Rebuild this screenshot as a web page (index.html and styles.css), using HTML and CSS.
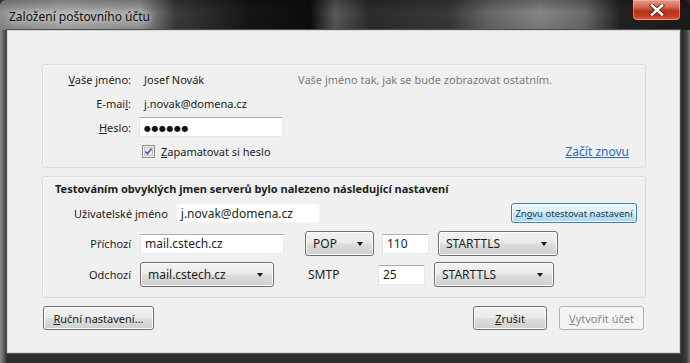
FILE: index.html
```html
<!DOCTYPE html>
<html lang="cs">
<head>
    <meta charset="UTF-8">
    <meta name="viewport" content="width=device-width, initial-scale=1.0">
    <title>Založení poštovního účtu</title>
    <link rel="stylesheet" href="styles.css">
</head>
<body>
    <div class="window">
        <div class="titlebar">
            <span class="title">Založení poštovního účtu</span>
            <div class="close-btn">
                <svg width="16" height="12" viewBox="0 0 16 12">
                    <path d="M3 1.5 L13 10.5 M13 1.5 L3 10.5" stroke="#5a1a10" stroke-width="4.2" stroke-linecap="square"/>
                    <path d="M3 1.5 L13 10.5 M13 1.5 L3 10.5" stroke="#ffffff" stroke-width="2.6" stroke-linecap="square"/>
                </svg>
            </div>
        </div>

        <div class="client">
            <!-- identity -->
            <div class="group identity">
                <div class="label"><u>V</u>aše jméno:</div>
                <div class="value">Josef Novák</div>
                <div class="hint">Vaše jméno tak, jak se bude zobrazovat ostatním.</div>

                <div class="label">E-mai<u>l</u>:</div>
                <div class="value">j.novak@domena.cz</div>
                <div></div>

                <div class="label"><u>H</u>eslo:</div>
                <div class="textbox pass-box"><span class="dots">●●●●●●</span></div>
                <div></div>

                <div></div>
                <div class="check-row">
                    <span class="checkbox">
                        <svg width="13" height="13" viewBox="0 0 13 13">
                            <rect x="0.5" y="0.5" width="12" height="12" fill="#f4f4f4" stroke="#8e8f8f"/>
                            <rect x="2.5" y="2.5" width="8" height="8" fill="#e6e8ea" stroke="#c4c7cb"/>
                            <path d="M3.5 6.5 L5.5 8.8 L9.6 3.4" fill="none" stroke="#4b5d8f" stroke-width="1.6"/>
                        </svg>
                    </span>
                    <span><u>Z</u>apamatovat si heslo</span>
                </div>
                <div class="restart"><a href="#">Začít znovu</a></div>
            </div>

            <!-- servers -->
            <div class="group servers">
                <div class="servers-head">Testováním obvyklých jmen serverů bylo nalezeno následující nastavení</div>

                <div class="user-row">
                    <span class="user-label">Uživatelské jméno</span>
                    <div class="textbox user-box">j.novak@domena.cz</div>
                    <button class="btn btn-hot">Zn<u>o</u>vu otestovat nastavení</button>
                </div>

                <div class="server-row">
                    <span class="row-label">Příchozí</span>
                    <div class="textbox host-box">mail.cstech.cz</div>
                    <div class="menulist proto">POP<span class="arrow"></span></div>
                    <div class="textbox port-box">110</div>
                    <div class="menulist sec">STARTTLS<span class="arrow"></span></div>
                </div>

                <div class="server-row out">
                    <span class="row-label">Odchozí</span>
                    <div class="menulist host-list">mail.cstech.cz<span class="arrow"></span></div>
                    <span class="proto-text">SMTP</span>
                    <div class="textbox port-box">25</div>
                    <div class="menulist sec">STARTTLS<span class="arrow"></span></div>
                </div>
            </div>

            <div class="actions">
                <button class="btn manual"><u>R</u>uční nastavení...</button>
                <span class="spacer"></span>
                <button class="btn cancel"><u>Z</u>rušit</button>
                <button class="btn create" disabled><u>V</u>ytvořit účet</button>
            </div>
        </div>
    </div>
</body>
</html>
```

FILE: styles.css
```css
body {
    margin: 0;
    background: #2b2b2b;
    font-family: "Segoe UI", "Noto Sans", "DejaVu Sans", sans-serif;
    font-size: 11px;
    color: #1e1e1e;
}
.window {
    width: 690px;
    height: 363px;
    box-sizing: border-box;
    padding: 0 10px 10px 7px;
    background: linear-gradient(90deg, #8c8c8c 0, #5a5a5a 4px, #2e2e2e 7px, #2e2e2e 683px, #444 687px, #7a7a7a 690px);
    border-radius: 6px 6px 0 0;
}
.titlebar {
    height: 30px;
    margin: 0 -10px 0 -7px;
    padding-left: 9px;
    display: flex;
    align-items: flex-start;
    justify-content: space-between;
    border-radius: 6px 6px 0 0;
    background:
        linear-gradient(180deg, rgba(0,0,0,0.25) 0, rgba(0,0,0,0) 40%, rgba(0,0,0,0.1) 100%),
        linear-gradient(90deg, #8f8f8f 0, #a9a9a9 60px, #9a9a9a 140px, #3c3c3c 175px, #151515 250px, #0c0c0c 310px, #5a5a5a 335px, #2c2c2c 370px, #3a3a3a 450px, #686868 490px, #858585 540px, #6a6a6a 585px, #232323 620px, #1b1b1b 690px);
}
.title {
    margin-top: 8px;
    font-size: 12px;
    color: #111;
    text-shadow: 0 0 6px #e8e8e8, 0 0 10px #d8d8d8;
}
.close-btn {
    width: 47px;
    height: 20px;
    margin-right: 9px;
    display: flex;
    align-items: center;
    justify-content: center;
    border: 1px solid #3a1008;
    border-top: none;
    border-radius: 0 0 5px 5px;
    background: linear-gradient(180deg, #e29b8a 0, #d46a52 35%, #b8301a 55%, #c23c22 80%, #d86a4a 100%);
    box-shadow: inset 0 0 0 1px rgba(255,210,190,0.45);
}
.client {
    height: 323px;
    box-sizing: border-box;
    padding: 33px 33px 0 34px;
    background: #f0f0f0;
    border: 1px solid #d6d6d6;
    box-shadow: 0 0 0 1px #505050;
}
.group {
    border: 1px solid #dcdcdc;
    border-radius: 3px;
    box-shadow: inset 1px 1px 0 #fafafa;
    box-sizing: border-box;
}
.identity {
    height: 104px;
    padding-top: 2px;
    display: grid;
    grid-template-columns: 88px 150px 1fr;
    grid-auto-rows: 24px;
    column-gap: 8px;
    align-items: center;
}
.label {
    text-align: right;
    color: #1e1e1e;
}
.value {
    padding-left: 5px;
}
.hint {
    color: #7a7a7a;
    padding-left: 1px;
}
.textbox {
    box-sizing: border-box;
    height: 20px;
    background: #fff;
    border: 1px solid #e3e9ef;
    border-top-color: #abadb3;
    border-left-color: #e2e3ea;
    padding-left: 4px;
    display: flex;
    align-items: center;
}
.pass-box {
    width: 144px;
}
.dots {
    font-size: 8px;
    letter-spacing: 0.5px;
    color: #111;
}
.check-row {
    display: flex;
    align-items: center;
    gap: 6px;
    padding-left: 3px;
    white-space: nowrap;
}
.checkbox {
    display: flex;
}
.restart {
    text-align: right;
    padding-right: 16px;
}
.restart a {
    color: #2a6bb0;
    font-size: 12px;
}
.servers {
    height: 122px;
    margin-top: 8px;
    padding: 3px 8px 0 0;
}
.servers-head {
    font-weight: bold;
    padding-left: 12px;
    height: 18px;
    line-height: 18px;
}
.user-row {
    display: flex;
    align-items: center;
    height: 20px;
    margin-top: 5px;
    padding-left: 31px;
}
.user-label {
    margin-right: 8px;
}
.user-box {
    width: 144px;
    border-color: #f4f4f4;
}
.btn {
    font-family: inherit;
    font-size: 11px;
    color: #1e1e1e;
    box-sizing: border-box;
    height: 23px;
    padding: 0 4px;
    border: 1px solid #707070;
    border-radius: 3px;
    background: linear-gradient(180deg, #f2f2f2 0, #ebebeb 48%, #dddddd 52%, #cfcfcf 100%);
    box-shadow: inset 0 0 0 1px #fcfcfc;
}
.btn-hot {
    margin-left: auto;
    width: 126px;
    height: 20px;
    padding: 0;
    font-size: 9.5px;
    color: #333;
    border-color: #3c7fb1;
    background: linear-gradient(180deg, #eaf6fd 0, #d9f0fc 48%, #bee6fd 52%, #a7d9f5 100%);
}
.server-row {
    display: flex;
    align-items: center;
    height: 25px;
    margin-top: 8px;
}
.server-row.out {
    margin-top: 6px;
}
.row-label {
    width: 88px;
    text-align: right;
    margin-right: 9px;
}
.host-box {
    width: 144px;
}
.menulist {
    box-sizing: border-box;
    height: 25px;
    display: flex;
    align-items: center;
    padding: 0 10px 0 7px;
    border: 1px solid #707070;
    border-radius: 3px;
    background: linear-gradient(180deg, #f2f2f2 0, #ebebeb 48%, #dddddd 52%, #cfcfcf 100%);
    box-shadow: inset 0 0 0 1px #fcfcfc;
    font-size: 12px;
}
.arrow {
    margin-left: auto;
    width: 0;
    height: 0;
    border-left: 3.5px solid transparent;
    border-right: 3.5px solid transparent;
    border-top: 4px solid #1a1a1a;
}
.proto {
    width: 69px;
    margin-left: 21px;
}
.server-row .port-box {
    width: 47px;
    margin-left: 8px;
    font-size: 12px;
}
.sec {
    width: 120px;
    margin-left: 9px;
}
.host-list {
    width: 134px;
}
.proto-text {
    width: 69px;
    margin-left: 31px;
    padding-left: 3px;
    box-sizing: border-box;
    font-size: 12px;
}
.server-row.out .port-box {
    margin-left: 4px;
}
.server-row.out .sec {
    margin-left: 9px;
}
.host-box, .user-box {
    font-size: 12px;
}
.actions {
    display: flex;
    align-items: center;
    margin-top: 8px;
    padding-left: 1px;
}
.spacer {
    flex: 1;
}
.manual {
    width: 111px;
    height: 24px;
}
.cancel {
    width: 74px;
    height: 24px;
    margin-right: 12px;
}
.create {
    width: 85px;
    height: 24px;
    margin-right: 2px;
    color: #8a8a8a;
    border-color: #adb2b5;
    background: #f4f4f4;
    box-shadow: none;
}
```
